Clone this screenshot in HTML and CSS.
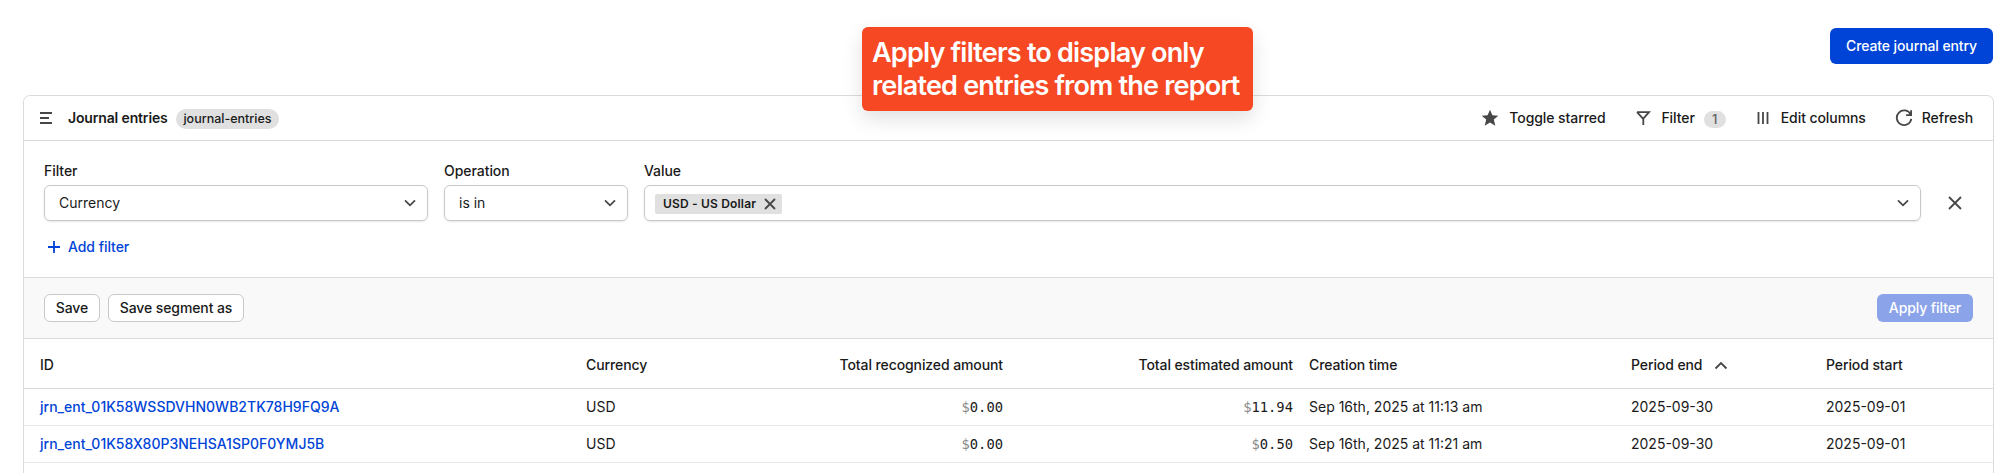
FILE: index.html
```html
<!DOCTYPE html>
<html lang="en">
<head>
<meta charset="utf-8">
<title>Journal entries</title>
<link rel="stylesheet" href="styles.css">
</head>
<body>
<div class="page">
  <header class="topbar"><button class="btn btn-primary">Create journal entry</button></header>
  <div class="callout">Apply filters to display only<br>related entries from the report</div>
  <main class="card">
    <div class="card-head">
      <svg class="menu-icon" width="12" height="12" viewBox="0 0 12 12"><path d="M0 1h12M0 6h9M0 11h12" /></svg>
      <h1 class="title">Journal entries</h1>
      <span class="tag">journal-entries</span>
      <nav class="tools">
        <span class="tool starred"><svg width="18" height="18" viewBox="0 0 18 18"><path class="solid" d="M9 .8l2.400 5.400 5.900.5-4.500 3.900 1.500 6.100L9 13.500l-5.300 3.200 1.500-6.100L.7 6.700l5.900-.5z"/></svg><span class="label">Toggle starred</span></span>
        <span class="tool filter"><svg width="16" height="16" viewBox="0 0 16 16"><path d="M2 2.200h12L8.300 8.700V15M8 8.700L2 2.200" /></svg><span class="label">Filter</span><span class="count">1</span></span>
        <span class="tool columns"><svg width="12" height="14" viewBox="0 0 12 14"><path d="M1.500 1v12M6 1v12M10.500 1v12"/></svg><span class="label">Edit columns</span></span>
        <span class="tool refresh"><svg width="18" height="18" viewBox="0 0 18 18"><path d="M15.600 5.400A7.300 7.300 0 1 0 16.300 9.800M16.100 1.200v4.900h-5"/></svg><span class="label">Refresh</span></span>
      </nav>
    </div>
    <section class="filters">
      <div class="fields">
        <div class="field field-name"><label>Filter</label><div class="select"><span>Currency</span><svg class="chev" width="12" height="8" viewBox="0 0 12 8"><path d="M1 1.300l5 5 5-5"/></svg></div></div>
        <div class="field field-op"><label>Operation</label><div class="select"><span>is in</span><svg class="chev" width="12" height="8" viewBox="0 0 12 8"><path d="M1 1.300l5 5 5-5"/></svg></div></div>
        <div class="field field-value"><label>Value</label><div class="select multi"><span class="chip">USD - US Dollar<svg width="12" height="12" viewBox="0 0 12 12"><path d="M1 1l10 10M11 1L1 11"/></svg></span><svg class="chev" width="12" height="8" viewBox="0 0 12 8"><path d="M1 1.300l5 5 5-5"/></svg></div></div>
        <svg class="remove" width="14" height="14" viewBox="0 0 14 14"><path d="M1 1l12 12M13 1L1 13"/></svg>
      </div>
      <div class="add"><svg width="12" height="12" viewBox="0 0 12 12"><path d="M6 0v12M0 6h12"/></svg><span class="add-label">Add filter</span></div>
    </section>
    <section class="actions">
      <button class="btn btn-small save">Save</button>
      <button class="btn btn-small segment">Save segment as</button>
      <button class="btn btn-small apply">Apply filter</button>
    </section>
    <div class="table">
      <div class="row head"><span>ID</span><span>Currency</span><span class="num">Total recognized amount</span><span class="num">Total estimated amount</span><span class="time">Creation time</span><span class="sorted">Period end<svg width="14" height="9" viewBox="0 0 14 9"><path d="M1.500 7.500L7 2l5.500 5.500"/></svg></span><span>Period start</span></div>
      <div class="row"><a class="link">jrn_ent_01K58WSSDVHN0WB2TK78H9FQ9A</a><span>USD</span><span class="num money"><i>$</i>0.00</span><span class="num money"><i>$</i>11.94</span><span class="time">Sep 16th, 2025 at 11:13 am</span><span>2025-09-30</span><span>2025-09-01</span></div>
      <div class="row"><a class="link">jrn_ent_01K58X80P3NEHSA1SP0F0YMJ5B</a><span>USD</span><span class="num money"><i>$</i>0.00</span><span class="num money"><i>$</i>0.50</span><span class="time">Sep 16th, 2025 at 11:21 am</span><span>2025-09-30</span><span>2025-09-01</span></div>
    </div>
  </main>
</div>
</body>
</html>
```
FILE: styles.css
```css
* { box-sizing: border-box; }
body {
  margin: 0;
  background: #fff;
  color: #1a1a1a;
  font: 400 14px/20px Inter, sans-serif;
  overflow: hidden;
}
svg { flex: none; fill: none; stroke: #474747; stroke-width: 1.8; }
.solid { fill: #474747; stroke: none; }
.page { position: relative; height: 473px; padding: 28px 5px 0 23px; display: flex; flex-direction: column; overflow: hidden; }
.topbar { display: flex; justify-content: flex-end; padding-right: 1px; height: 67px; flex: none; }
.btn { font: 500 14px/20px Inter, sans-serif; letter-spacing: -0.1px; border: 0; border-radius: 6px; padding: 0; white-space: nowrap; }
.btn-primary { width: 163px; height: 36px; background: #0044d7; color: #fff; }
.callout {
  position: absolute;
  left: 862px;
  top: 27px;
  width: 391px;
  height: 84px;
  padding: 9px 10px;
  border-radius: 6px;
  background: #f54823;
  color: #fff;
  font-size: 27px;
  font-weight: 600;
  line-height: 33px;
  letter-spacing: -0.8px;
  white-space: nowrap;
  box-shadow: 0 8px 20px rgba(0, 0, 0, .12);
}
.card { flex: none; height: 400px; border: 1px solid #dbdbdb; border-radius: 7px 7px 0 0; }
.card-head { display: flex; align-items: center; height: 45px; border-bottom: 1px solid #dbdbdb; padding: 0 20px 0 16px; }
.title { margin: 0 0 0 16px; width: 99px; white-space: nowrap; font: 600 14px/20px Inter, sans-serif; letter-spacing: -0.15px; }
.tag { margin: 2px 0 0 9px; height: 20px; width: 103px; text-align: center; border-radius: 10px; background: #e0e0e0; font-size: 12.500px; font-weight: 500; }
.tools { margin-left: auto; display: flex; align-items: center; font-weight: 500; letter-spacing: -0.08px; }
.tool { display: flex; align-items: center; }
.starred .label { margin-left: 10px; }
.filter { margin-left: 30px; }
.filter .label { margin-left: 10px; }
.count { margin: 2px 0 0 9px; width: 22px; height: 17px; border-radius: 9px; background: #e0e0e0; color: #616161; font-size: 13px; line-height: 17px; text-align: center; }
.columns { margin-left: 31px; }
.columns .label { margin-left: 12px; }
.refresh { margin-left: 29px; }
.refresh .label { margin-left: 9px; }
.filters { height: 137px; padding: 20px 20px 0; border-bottom: 1px solid #dbdbdb; }
.fields { display: flex; gap: 16px; align-items: flex-end; }
.field label { display: block; margin-bottom: 4px; font-weight: 500; letter-spacing: -0.05px; }
.field-name { width: 384px; }
.field-op { width: 184px; }
.field-value { width: 1277px; }
.select { height: 36px; display: flex; align-items: center; justify-content: space-between; padding: 0 11px 0 14px; border: 1px solid #c9c9c9; border-radius: 6px; box-shadow: 0 1px 2px rgba(0, 0, 0, .1); }
.multi { padding-left: 10px; }
.chip { display: flex; align-items: center; justify-content: space-between; width: 127px; height: 20px; margin-top: 1px; padding: 0 6px 0 8px; border-radius: 2px; background: #e0e0e0; font-size: 12px; font-weight: 600; letter-spacing: 0.18px; white-space: nowrap; }
.remove { margin: 0 0 11px 11px; }
.add { display: flex; align-items: center; margin: 16px 0 0 4px; color: #0044d7; font-weight: 500; letter-spacing: -0.05px; }
.add svg { stroke: #0044d7; }
.add-label { margin-left: 8px; }
.actions { display: flex; align-items: center; height: 61px; padding: 0 20px; background: #f9f9f9; border-bottom: 1px solid #dbdbdb; }
.btn-small { height: 28px; background: #fff; color: #1a1a1a; border: 1px solid #c9c9c9; }
.save { width: 56px; }
.segment { width: 136px; margin-left: 8px; }
.apply { width: 96px; margin-left: auto; border: 0; background: #8ba4e9; color: #fff; }
.row { display: grid; grid-template-columns: 546px 187px 230px 290px 338px 195px auto; align-items: center; height: 37px; padding-left: 16px; border-bottom: 1px solid #e6e6e6; white-space: nowrap; }
.head { height: 50px; padding-top: 3px; border-bottom-color: #dbdbdb; font-weight: 500; letter-spacing: -0.1px; }
.num { text-align: right; }
.time { padding-left: 16px; }
.link { color: #0044d7; font-weight: 500; letter-spacing: 0.01px; }
.money { font-family: "DejaVu Sans Mono", monospace; font-size: 13.800px; }
.money i { color: #8a8a8a; font-style: normal; }
.sorted { display: flex; align-items: center; gap: 12px; }
```
